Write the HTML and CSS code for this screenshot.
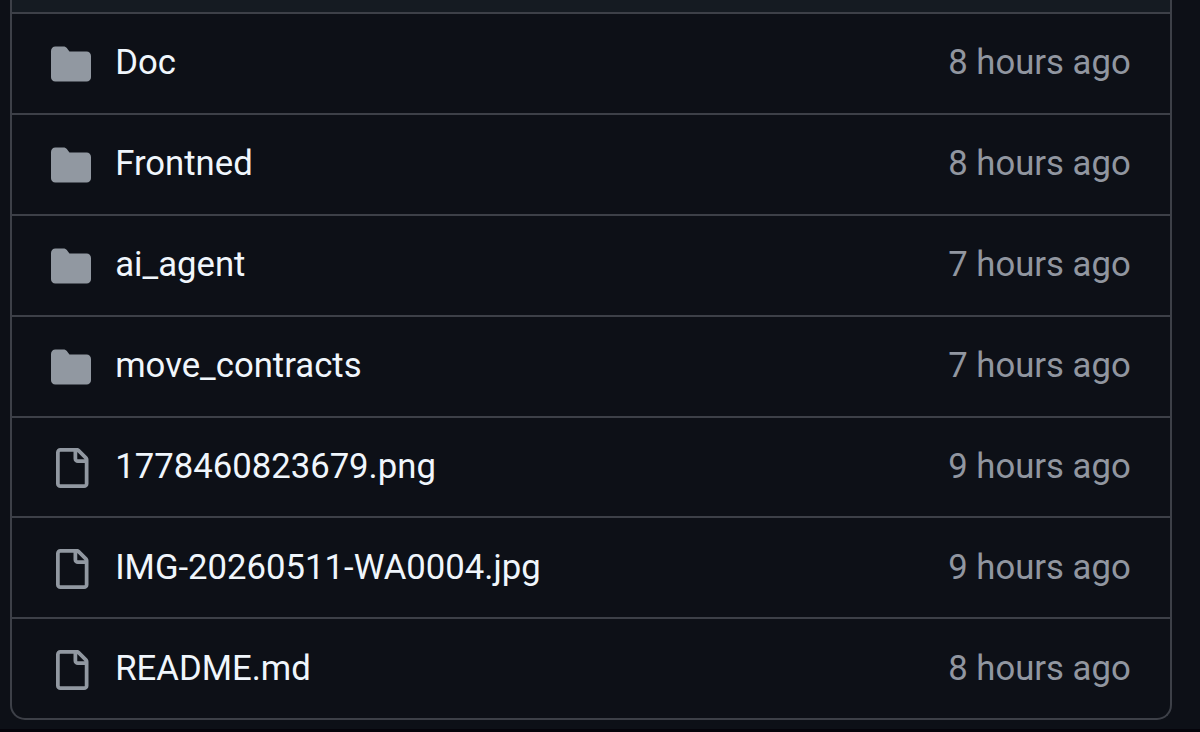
FILE: index.html
```html
<!DOCTYPE html>
<html lang="en">
<head>
    <meta charset="UTF-8">
    <meta name="viewport" content="width=device-width, initial-scale=1.0">
    <title>Files</title>
    <link rel="stylesheet" href="styles.css">
</head>
<body>
    <!-- Shared icons -->
    <svg class="sprite" width="0" height="0">
        <symbol id="folder" viewBox="0 0 16 16">
            <path d="M1.75 1A1.75 1.75 0 0 0 0 2.75v10.5C0 14.216.784 15 1.75 15h12.5A1.75 1.75 0 0 0 16 13.25v-8.5A1.75 1.75 0 0 0 14.25 3H7.5a.25.25 0 0 1-.2-.1l-.9-1.2C6.07 1.26 5.55 1 5 1H1.75Z"/>
        </symbol>
        <symbol id="file" viewBox="0 0 16 16">
            <path d="M2 1.75C2 .784 2.784 0 3.75 0h6.586c.464 0 .909.184 1.237.513l2.914 2.914c.329.328.513.773.513 1.237v9.586A1.75 1.75 0 0 1 13.25 16h-9.5A1.75 1.75 0 0 1 2 14.25Zm1.75-.25a.25.25 0 0 0-.25.25v12.5c0 .138.112.25.25.25h9.5a.25.25 0 0 0 .25-.25V6h-2.75A1.75 1.75 0 0 1 9 4.25V1.5Zm6.75.062V4.25c0 .138.112.25.25.25h2.688l-.011-.013-2.914-2.914-.013-.011Z"/>
        </symbol>
    </svg>

    <div class="files">
        <div class="files-header"></div>
        <div class="row">
            <svg class="icon"><use href="#folder"/></svg>
            <span class="name">Doc</span>
            <span class="age">8 hours ago</span>
        </div>
        <div class="row">
            <svg class="icon"><use href="#folder"/></svg>
            <span class="name">Frontned</span>
            <span class="age">8 hours ago</span>
        </div>
        <div class="row">
            <svg class="icon"><use href="#folder"/></svg>
            <span class="name">ai_agent</span>
            <span class="age">7 hours ago</span>
        </div>
        <div class="row">
            <svg class="icon"><use href="#folder"/></svg>
            <span class="name">move_contracts</span>
            <span class="age">7 hours ago</span>
        </div>
        <div class="row">
            <svg class="icon"><use href="#file"/></svg>
            <span class="name">1778460823679.png</span>
            <span class="age">9 hours ago</span>
        </div>
        <div class="row">
            <svg class="icon"><use href="#file"/></svg>
            <span class="name">IMG-20260511-WA0004.jpg</span>
            <span class="age">9 hours ago</span>
        </div>
        <div class="row">
            <svg class="icon"><use href="#file"/></svg>
            <span class="name">README.md</span>
            <span class="age">8 hours ago</span>
        </div>
    </div>
    <div class="bottom-bar"></div>
</body>
</html>
```

FILE: styles.css
```css
* { box-sizing: border-box; margin: 0; }
body { height: 732px; overflow: hidden; display: flex; flex-direction: column; background: #0d1017; font-family: Roboto, sans-serif; }
.sprite { display: none; }
.files {
    width: 1162px; margin-left: 10px; overflow: hidden;
    border: 2px solid #3d4048; border-top: none; border-radius: 0 0 15px 15px;
}
.files-header { height: 12px; background: #151b22; }
.row {
    display: flex; align-items: center; height: 100.9px;
    padding: 0 39.3px 0 38.6px; border-top: 2px solid #3d4048;
    font-size: 34.7px; line-height: 52px;
}
.icon { width: 40px; height: 40px; margin: 1.5px 24.6px 0 0; fill: #9198a1; }
.name, .age { padding-bottom: 2px; }
.name { color: #f0f6fc; }
.age { margin-left: auto; color: #9196a0; }
.bottom-bar { height: 3px; margin-top: auto; background: #05040b; }
```
